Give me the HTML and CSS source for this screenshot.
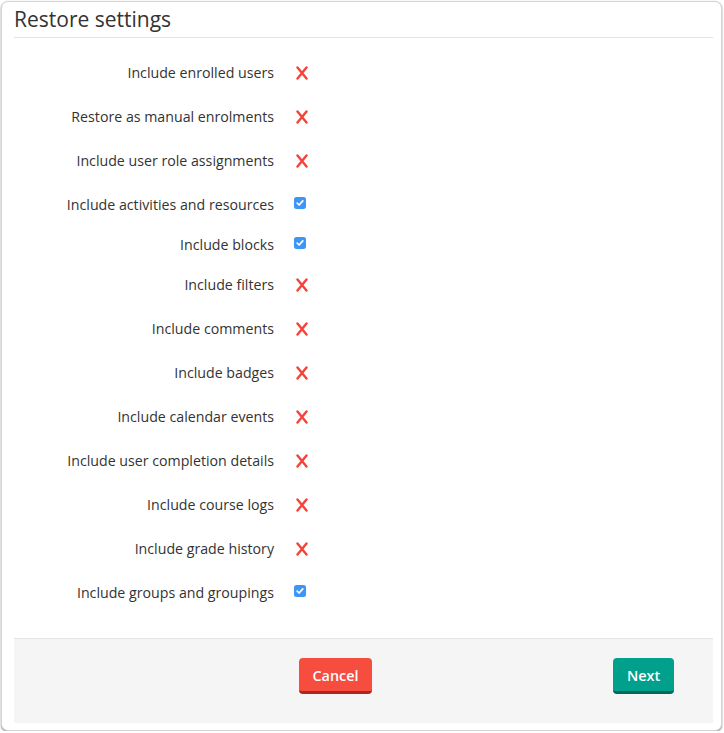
FILE: index.html
```html
<!DOCTYPE html>
<html>
<head>
<meta charset="utf-8">
<link rel="stylesheet" href="styles.css">
</head>
<body>
<div class="card">
  <h2 class="title">Restore settings</h2>
  <div class="rows">
    <div class="row"><span class="label">Include enrolled users</span><span class="no"><svg viewBox="0 0 12 14" width="12" height="14"><path d="M1.5 1.5 L10.5 12.5 M10.5 1.5 L1.5 12.5"/></svg></span></div>
    <div class="row"><span class="label">Restore as manual enrolments</span><span class="no"><svg viewBox="0 0 12 14" width="12" height="14"><path d="M1.5 1.5 L10.5 12.5 M10.5 1.5 L1.5 12.5"/></svg></span></div>
    <div class="row"><span class="label">Include user role assignments</span><span class="no"><svg viewBox="0 0 12 14" width="12" height="14"><path d="M1.5 1.5 L10.5 12.5 M10.5 1.5 L1.5 12.5"/></svg></span></div>
    <div class="row check"><span class="label">Include activities and resources</span><span class="box"><svg viewBox="0 0 12 12" width="12" height="12"><rect width="12" height="12" rx="2.5"/><path d="M3.2 6.2 L5.1 8 L8.8 3.9"/></svg></span></div>
    <div class="row check"><span class="label">Include blocks</span><span class="box"><svg viewBox="0 0 12 12" width="12" height="12"><rect width="12" height="12" rx="2.5"/><path d="M3.2 6.2 L5.1 8 L8.8 3.9"/></svg></span></div>
    <div class="row"><span class="label">Include filters</span><span class="no"><svg viewBox="0 0 12 14" width="12" height="14"><path d="M1.5 1.5 L10.5 12.5 M10.5 1.5 L1.5 12.5"/></svg></span></div>
    <div class="row"><span class="label">Include comments</span><span class="no"><svg viewBox="0 0 12 14" width="12" height="14"><path d="M1.5 1.5 L10.5 12.5 M10.5 1.5 L1.5 12.5"/></svg></span></div>
    <div class="row"><span class="label">Include badges</span><span class="no"><svg viewBox="0 0 12 14" width="12" height="14"><path d="M1.5 1.5 L10.5 12.5 M10.5 1.5 L1.5 12.5"/></svg></span></div>
    <div class="row"><span class="label">Include calendar events</span><span class="no"><svg viewBox="0 0 12 14" width="12" height="14"><path d="M1.5 1.5 L10.5 12.5 M10.5 1.5 L1.5 12.5"/></svg></span></div>
    <div class="row"><span class="label">Include user completion details</span><span class="no"><svg viewBox="0 0 12 14" width="12" height="14"><path d="M1.5 1.5 L10.5 12.5 M10.5 1.5 L1.5 12.5"/></svg></span></div>
    <div class="row"><span class="label">Include course logs</span><span class="no"><svg viewBox="0 0 12 14" width="12" height="14"><path d="M1.5 1.5 L10.5 12.5 M10.5 1.5 L1.5 12.5"/></svg></span></div>
    <div class="row"><span class="label">Include grade history</span><span class="no"><svg viewBox="0 0 12 14" width="12" height="14"><path d="M1.5 1.5 L10.5 12.5 M10.5 1.5 L1.5 12.5"/></svg></span></div>
    <div class="row check"><span class="label">Include groups and groupings</span><span class="box"><svg viewBox="0 0 12 12" width="12" height="12"><rect width="12" height="12" rx="2.5"/><path d="M3.2 6.2 L5.1 8 L8.8 3.9"/></svg></span></div>
  </div>
  <div class="footer">
    <button class="btn cancel">Cancel</button>
    <button class="btn next">Next</button>
  </div>
</div>
</body>
</html>
```

FILE: styles.css
```css
html, body {
  margin: 0;
  padding: 0;
  background: #ffffff;
}
body {
  font-family: "Open Sans", "Liberation Sans", sans-serif;
  color: #333333;
}
.card {
  box-sizing: border-box;
  margin: 1px 0 0 1px;
  width: 721px;
  height: 730px;
  border: 1px solid #d4d4d4;
  border-radius: 7px;
  box-shadow: 0 1px 2px rgba(0, 0, 0, 0.45);
  padding: 5px 8px 0 12px;
  background: #fff;
}
.title {
  margin: 0;
  font-size: 21px;
  font-weight: 400;
  line-height: 24px;
  color: #333;
  padding-bottom: 6px;
  border-bottom: 1px solid #e3e3e3;
}
.rows {
  padding-top: 12px;
}
.row {
  display: flex;
  align-items: center;
  height: 44px;
}
.row.check {
  height: 40px;
  box-sizing: border-box;
  padding-top: 4px;
}
.label {
  width: 260px;
  text-align: right;
  font-size: 14.2px;
  color: #333;
}
.no {
  display: flex;
  margin-left: 22px;
  margin-top: 1px;
}
.no svg path {
  stroke: #f7423a;
  stroke-width: 2.4;
  stroke-linecap: round;
  fill: none;
}
.box {
  display: flex;
  margin-left: 20px;
  margin-top: -2px;
}
.box svg rect {
  fill: #3d96f5;
}
.box svg path {
  stroke: #ffffff;
  stroke-width: 1.7;
  stroke-linecap: round;
  stroke-linejoin: round;
  fill: none;
}
.footer {
  margin-top: 28px;
  height: 85px;
  box-sizing: border-box;
  background: #f5f5f5;
  border-top: 1px solid #e5e5e5;
  display: flex;
  align-items: flex-start;
  justify-content: space-between;
  padding: 19px 39px 0 285px;
}
.btn {
  font-family: "Open Sans", "Liberation Sans", sans-serif;
  font-size: 14.4px;
  font-weight: 600;
  color: #fff;
  border: 0;
  border-radius: 4px;
  height: 36px;
  box-sizing: border-box;
  padding: 0;
  line-height: 35px;
}
.cancel {
  width: 73px;
  background: #f64d3f;
  border-bottom: 3px solid #a9291f;
}
.next {
  width: 61px;
  background: #00a08c;
  border-bottom: 3px solid #00695c;
}
```
